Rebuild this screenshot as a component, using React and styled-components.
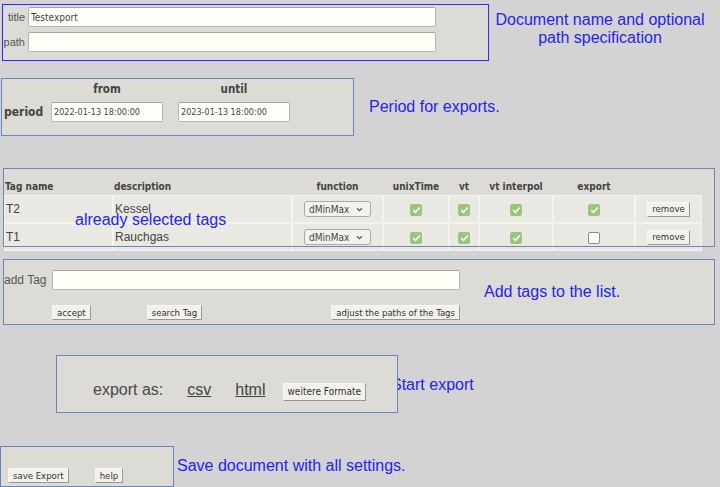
import React from "react";
import styled, { createGlobalStyle } from "styled-components";

const ui = `"DejaVu Sans Condensed", "DejaVu Sans", sans-serif`;

const GlobalStyle = createGlobalStyle`
  * { box-sizing: border-box; }
  html, body { margin: 0; padding: 0; background: #d3d3d3; }
  body { font-family: "Liberation Sans", Arial, sans-serif; color: #444; }
`;

const Page = styled.div`
  width: 720px;
  height: 487px;
  overflow: hidden;
  display: flex;
  flex-direction: column;
`;

const Section = styled.div`
  display: flex;
  align-items: ${(p) => p.$align || "flex-start"};
  margin-top: ${(p) => p.$mt}px;
  padding-left: ${(p) => p.$ml || 0}px;
`;

const Panel = styled.div`
  position: relative;
  flex: none;
  width: ${(p) => p.$w}px;
  height: ${(p) => p.$h}px;
  background: #dcdbd5;
  border: 1px solid ${(p) => (p.$accent ? "#2b2bff" : "#6586bf")};

  /* the table overflows the box, keep the frame line on top of it */
  &::after {
    content: "";
    position: absolute;
    inset: -1px;
    border: 1px solid ${(p) => (p.$accent ? "#2b2bff" : "#6586bf")};
    pointer-events: none;
  }
`;

const Note = styled.div`
  flex: none;
  font-family: "Liberation Sans", Arial, sans-serif;
  font-size: 16px;
  line-height: 18px;
  color: #2323f5;
  margin-top: ${(p) => p.$mt || 0}px;
  margin-left: ${(p) => p.$ml || 0}px;
  width: ${(p) => (p.$w ? `${p.$w}px` : "auto")};
  text-align: ${(p) => (p.$w ? "center" : "left")};
  white-space: ${(p) => (p.$w ? "normal" : "nowrap")};
`;

const Overlay = styled(Note)`
  position: absolute;
  top: 42px;
  left: 71px;
  margin: 0;
`;

const FieldGrid = styled.div`
  display: grid;
  grid-template-columns: ${(p) => p.$cols};
  column-gap: ${(p) => p.$gap || 0}px;
  row-gap: ${(p) => p.$rowGap || 0}px;
  align-items: center;
  padding-top: ${(p) => p.$pt || 0}px;
`;

const Label = styled.span`
  font-size: ${(p) => p.$size || 11}px;
  color: #555;
  text-align: ${(p) => (p.$left ? "left" : "right")};
  white-space: nowrap;
`;

const BoldLabel = styled.span`
  font-family: ${ui};
  font-weight: bold;
  font-size: ${(p) => p.$size || 11.5}px;
  line-height: 13px;
  color: #444;
  width: ${(p) => (p.$w ? `${p.$w}px` : "auto")};
  text-align: ${(p) => (p.$w ? "center" : "left")};
`;

const TextInput = styled.input`
  width: ${(p) => (p.$w ? `${p.$w}px` : "100%")};
  height: 20px;
  margin: 0;
  padding: 0 2px;
  background: #fffff8;
  border: 1px solid #b5b5b2;
  border-top-color: #a5a5a2;
  border-radius: 2px;
  font-family: ${ui};
  font-size: ${(p) => p.$fs || 10}px;
  color: #444;
  outline: none;
`;

const PeriodGrid = styled.div`
  display: grid;
  grid-template-columns: 47px 127px 112px;
  grid-template-rows: 13px 20px;
  row-gap: 6px;
  align-items: center;
  padding: 4px 0 0 2px;
`;

const Table = styled.table`
  border-collapse: separate;
  border-spacing: 0;
  table-layout: fixed;
  width: 698px;
  margin-top: 8px;
`;

const Th = styled.th`
  height: 18px;
  padding: 0 1px;
  font-family: ${ui};
  font-weight: bold;
  font-size: 10px;
  color: #444;
  text-align: ${(p) => (p.$left ? "left" : "center")};
  vertical-align: middle;
  white-space: nowrap;
`;

const Td = styled.td`
  height: 28px;
  padding: 0 1px;
  background: #e9e8e3;
  border: 1px solid #f4f4ef;
  font-size: 12px;
  color: #444;
  text-align: ${(p) => (p.$left ? "left" : "center")};
  vertical-align: middle;
`;

const Select = styled.div`
  display: inline-flex;
  align-items: center;
  justify-content: space-between;
  width: 67px;
  height: 16px;
  padding: 0 7px 0 4px;
  background: #f3f2ee;
  border: 1px solid #a9a9a7;
  border-radius: 3px;
  font-family: ${ui};
  font-size: 10px;
  color: #444;
  vertical-align: middle;
`;

const Check = styled.span`
  display: inline-flex;
  align-items: center;
  justify-content: center;
  width: 12px;
  height: 12px;
  border-radius: 2px;
  background: ${(p) => (p.$on ? "#9cc57c" : "#fff")};
  border: 1px solid ${(p) => (p.$on ? "#9cc57c" : "#8a8a8a")};
  vertical-align: middle;
`;

const Button = styled.button`
  flex: none;
  height: ${(p) => (p.$tall ? 18 : 15)}px;
  margin: 0;
  padding: 0 4px;
  background: #f2f1ec;
  border: 1px solid;
  border-color: #f8f8f4 #979795 #979795 #f8f8f4;
  border-radius: 0;
  font-family: ${ui};
  font-size: ${(p) => (p.$tall ? 10 : 9.5)}px;
  line-height: 1;
  color: #333;
  white-space: nowrap;
`;

const ButtonBar = styled.div`
  display: flex;
  align-items: center;
`;

const Spaced = styled.div`
  margin-left: ${(p) => (p.$auto ? "auto" : `${p.$ml}px`)};
  display: flex;
`;

const AddRow = styled.div`
  display: flex;
  align-items: flex-start;
  padding-top: 10px;
`;

const ExportRow = styled.div`
  display: flex;
  align-items: baseline;
  padding: 25px 0 0 36px;
  font-size: 16px;
  color: #4a4a4a;
`;

const Link = styled.a`
  margin-left: ${(p) => p.$ml}px;
  color: #444;
  text-decoration: underline;
  cursor: pointer;
`;

const SaveRow = styled.div`
  display: flex;
  gap: 26px;
  padding: 21px 0 0 7px;
`;

const Chevron = () => (
  <svg width="7" height="5" viewBox="0 0 7 5">
    <path d="M1 1.2 L3.5 3.6 L6 1.2" fill="none" stroke="#555" strokeWidth="1.2" />
  </svg>
);

const Tick = () => (
  <svg width="9" height="8" viewBox="0 0 9 8">
    <path d="M1.3 4.2 L3.5 6.3 L7.8 1.5" fill="none" stroke="#fff" strokeWidth="1.6" />
  </svg>
);

const tags = [
  { name: "T2", description: "Kessel", export: true },
  { name: "T1", description: "Rauchgas", export: false },
];

const widths = [109, 179, 91, 66, 30, 74, 82, 67];

export default function App() {
  return (
    <Page>
      <GlobalStyle />

      <Section $mt={4} $ml={2}>
        <Panel $w={487} $h={57} $accent>
          <FieldGrid $cols="22px 408px" $gap={3} $rowGap={5} $pt={2}>
            <Label>title</Label>
            <TextInput defaultValue="Testexport" />
            <Label>path</Label>
            <TextInput defaultValue="" />
          </FieldGrid>
        </Panel>
        <Note $mt={7} $ml={4} $w={214}>
          Document name and optional path specification
        </Note>
      </Section>

      <Section $mt={17} $ml={1} $align="center">
        <Panel $w={353} $h={58}>
          <PeriodGrid>
            <span />
            <BoldLabel $w={112}>from</BoldLabel>
            <BoldLabel $w={112}>until</BoldLabel>
            <BoldLabel $size={12}>period</BoldLabel>
            <TextInput $w={112} $fs={9} defaultValue="2022-01-13 18:00:00" />
            <TextInput $w={112} $fs={9} defaultValue="2023-01-13 18:00:00" />
          </PeriodGrid>
        </Panel>
        <Note $ml={15}>Period for exports.</Note>
      </Section>

      <Section $mt={32} $ml={3}>
        <Panel $w={712} $h={79}>
          <Table>
            <colgroup>
              {widths.map((w, i) => (
                <col key={i} style={{ width: w }} />
              ))}
            </colgroup>
            <thead>
              <tr>
                <Th $left>Tag name</Th>
                <Th $left>description</Th>
                <Th>function</Th>
                <Th>unixTime</Th>
                <Th>vt</Th>
                <Th>vt interpol</Th>
                <Th>export</Th>
                <Th />
              </tr>
            </thead>
            <tbody>
              {tags.map((t) => (
                <tr key={t.name}>
                  <Td $left>{t.name}</Td>
                  <Td $left>{t.description}</Td>
                  <Td>
                    <Select>
                      dMinMax
                      <Chevron />
                    </Select>
                  </Td>
                  <Td>
                    <Check $on>
                      <Tick />
                    </Check>
                  </Td>
                  <Td>
                    <Check $on>
                      <Tick />
                    </Check>
                  </Td>
                  <Td>
                    <Check $on>
                      <Tick />
                    </Check>
                  </Td>
                  <Td>
                    <Check $on={t.export}>{t.export && <Tick />}</Check>
                  </Td>
                  <Td>
                    <Button>remove</Button>
                  </Td>
                </tr>
              ))}
            </tbody>
          </Table>
          <Overlay>already selected tags</Overlay>
        </Panel>
      </Section>

      <Section $mt={12} $ml={3}>
        <Panel $w={712} $h={66}>
          <AddRow>
            <FieldGrid $cols="48px 408px" $rowGap={15}>
              <Label $size={12} $left>
                add Tag
              </Label>
              <TextInput />
              <span />
              <ButtonBar>
                <Button>accept</Button>
                <Spaced $ml={56}>
                  <Button>search Tag</Button>
                </Spaced>
                <Spaced $auto>
                  <Button>adjust the paths of the Tags</Button>
                </Spaced>
              </ButtonBar>
            </FieldGrid>
            <Note $mt={13} $ml={24}>
              Add tags to the list.
            </Note>
          </AddRow>
        </Panel>
      </Section>

      <Section $mt={30} $ml={56}>
        <Panel $w={342} $h={58}>
          <ExportRow>
            <span>export as:</span>
            <Link $ml={24}>csv</Link>
            <Link $ml={24}>html</Link>
            <Spaced $ml={17}>
              <Button $tall>weitere Formate</Button>
            </Spaced>
          </ExportRow>
        </Panel>
        <Note $mt={21} $ml={-7}>
          Start export
        </Note>
      </Section>

      <Section $mt={33}>
        <Panel $w={174} $h={41}>
          <SaveRow>
            <Button>save Export</Button>
            <Button>help</Button>
          </SaveRow>
        </Panel>
        <Note $mt={11} $ml={3}>
          Save document with all settings.
        </Note>
      </Section>
    </Page>
  );
}
